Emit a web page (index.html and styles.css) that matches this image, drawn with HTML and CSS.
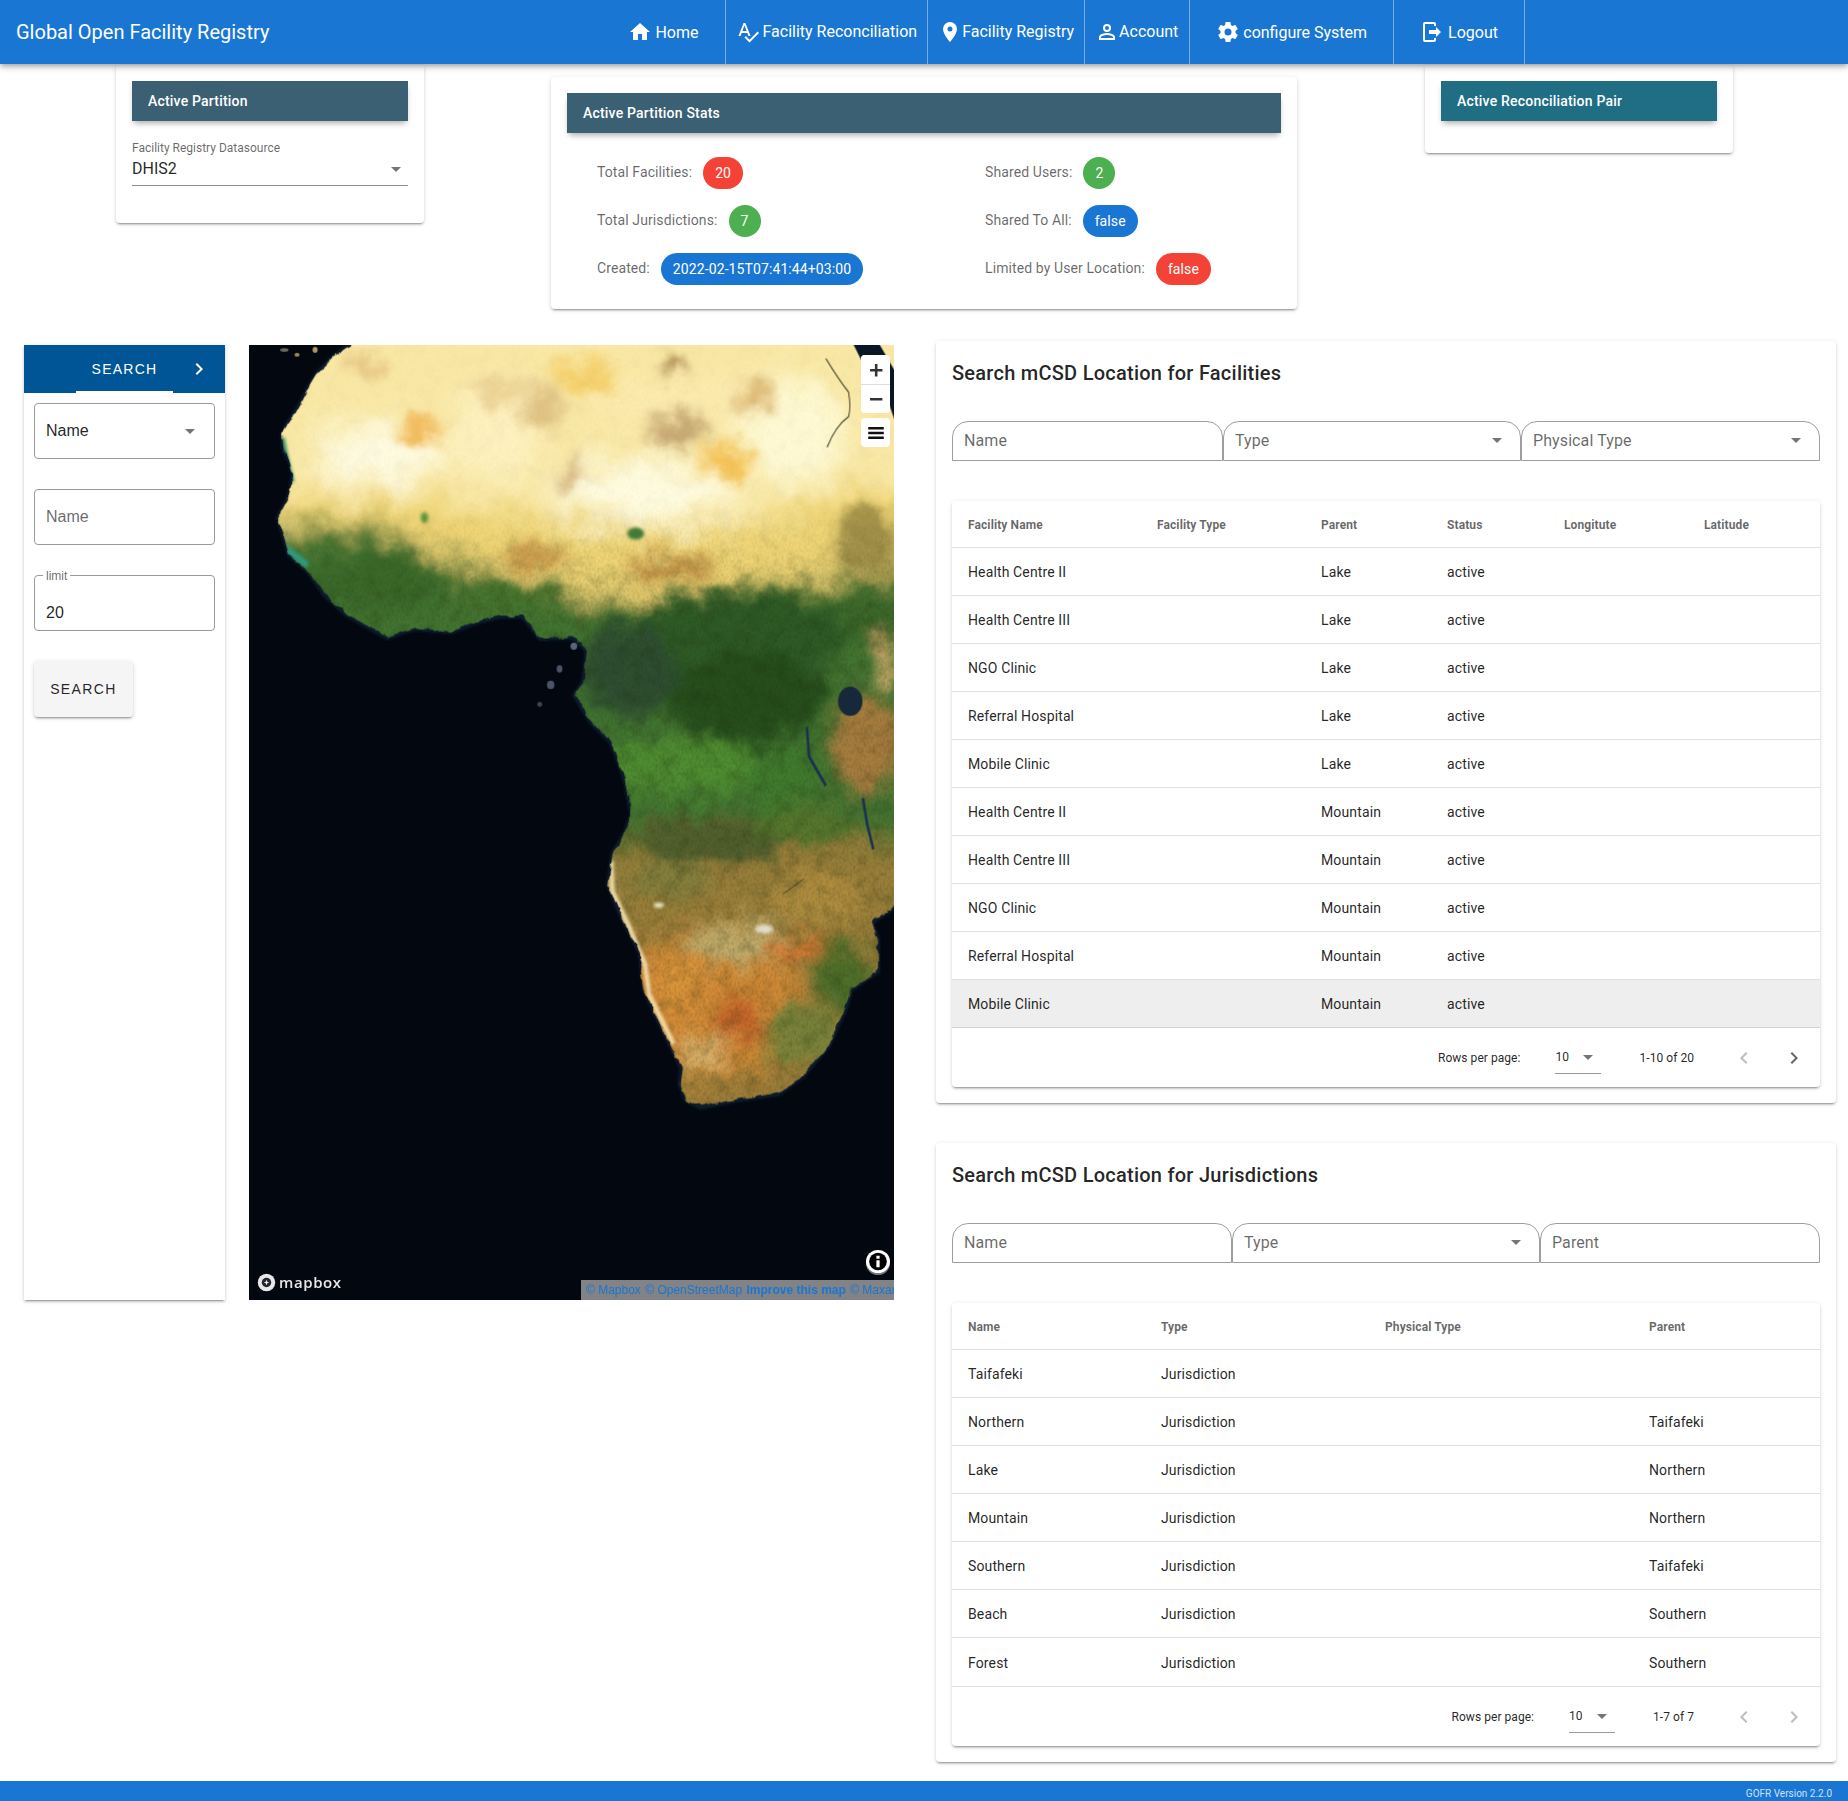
FILE: index.html
```html
<!DOCTYPE html>
<html lang="en">
<head>
  <meta charset="UTF-8" />
  <title>Global Open Facility Registry</title>
  <link rel="stylesheet" href="styles.css">
</head>
<body>

  <svg class="icon-defs" aria-hidden="true">
    <symbol id="i-home" viewBox="0 0 24 24"><path d="M10,20V14H14V20H19V12H22L12,3L2,12H5V20H10Z"/></symbol>
    <symbol id="i-check" viewBox="0 0 24 24"><path d="M21.59,11.59L13.5,19.68L9.83,16L8.42,17.41L13.5,22.5L23,13M6.43,11L8.5,5.5L10.57,11M12.45,16H14.54L9.43,3H7.57L2.46,16H4.55L5.67,13H11.31L12.45,16Z"/></symbol>
    <symbol id="i-marker" viewBox="0 0 24 24"><path d="M12,11.5A2.5,2.5 0 0,1 9.5,9A2.5,2.5 0 0,1 12,6.5A2.5,2.5 0 0,1 14.5,9A2.5,2.5 0 0,1 12,11.5M12,2A7,7 0 0,0 5,9C5,14.25 12,22 12,22C12,22 19,14.25 19,9A7,7 0 0,0 12,2Z"/></symbol>
    <symbol id="i-account" viewBox="0 0 24 24"><path d="M12,4A4,4 0 0,1 16,8A4,4 0 0,1 12,12A4,4 0 0,1 8,8A4,4 0 0,1 12,4M12,6A2,2 0 0,0 10,8A2,2 0 0,0 12,10A2,2 0 0,0 14,8A2,2 0 0,0 12,6M12,13C14.67,13 20,14.33 20,17V20H4V17C4,14.33 9.33,13 12,13M12,14.9C9.03,14.9 5.9,16.36 5.9,17V18.1H18.1V17C18.1,16.36 14.97,14.9 12,14.9Z"/></symbol>
    <symbol id="i-cog" viewBox="0 0 24 24"><path d="M12,15.5A3.5,3.5 0 0,1 8.5,12A3.5,3.5 0 0,1 12,8.5A3.5,3.5 0 0,1 15.5,12A3.5,3.5 0 0,1 12,15.5M19.43,12.97C19.47,12.65 19.5,12.33 19.5,12C19.5,11.67 19.47,11.34 19.43,11L21.54,9.37C21.73,9.22 21.78,8.95 21.66,8.73L19.66,5.27C19.54,5.05 19.27,4.96 19.05,5.05L16.56,6.05C16.04,5.66 15.5,5.32 14.87,5.07L14.5,2.42C14.46,2.18 14.25,2 14,2H10C9.75,2 9.54,2.18 9.5,2.42L9.13,5.07C8.5,5.32 7.96,5.66 7.44,6.05L4.95,5.05C4.73,4.96 4.46,5.05 4.34,5.27L2.34,8.73C2.21,8.95 2.27,9.22 2.46,9.37L4.57,11C4.53,11.34 4.5,11.67 4.5,12C4.5,12.33 4.53,12.65 4.57,12.97L2.46,14.63C2.27,14.78 2.21,15.05 2.34,15.27L4.34,18.73C4.46,18.95 4.73,19.03 4.95,18.95L7.44,17.94C7.96,18.34 8.5,18.68 9.13,18.93L9.5,21.58C9.54,21.82 9.75,22 10,22H14C14.25,22 14.46,21.82 14.5,21.58L14.87,18.93C15.5,18.67 16.04,18.34 16.56,17.94L19.05,18.95C19.27,19.03 19.54,18.95 19.66,18.73L21.66,15.27C21.78,15.05 21.73,14.78 21.54,14.63L19.43,12.97Z"/></symbol>
    <symbol id="i-logout" viewBox="0 0 24 24"><path d="M16,17V14H9V10H16V7L21,12L16,17M14,2A2,2 0 0,1 16,4V6H14V4H5V20H14V18H16V20A2,2 0 0,1 14,22H5A2,2 0 0,1 3,20V4A2,2 0 0,1 5,2H14Z"/></symbol>
    <symbol id="i-right" viewBox="0 0 24 24"><path d="M8.59,16.58L13.17,12L8.59,7.41L10,6L16,12L10,18L8.59,16.58Z"/></symbol>
    <symbol id="i-left" viewBox="0 0 24 24"><path d="M15.41,16.58L10.83,12L15.41,7.41L14,6L8,12L14,18L15.41,16.58Z"/></symbol>
    <symbol id="i-drop" viewBox="0 0 24 24"><path d="M7,10L12,15L17,10H7Z"/></symbol>
  </svg>

  <header class="app-bar">
    <div class="app-title">Global Open Facility Registry</div>
    <nav class="app-nav">
      <a class="nav-btn nav-wide"><svg class="nav-icon"><use href="#i-home"/></svg>Home</a>
      <a class="nav-btn nav-tight"><svg class="nav-icon nav-icon-gap"><use href="#i-check"/></svg>Facility Reconciliation</a>
      <a class="nav-btn nav-tight"><svg class="nav-icon"><use href="#i-marker"/></svg>Facility Registry</a>
      <a class="nav-btn nav-tight nav-account"><svg class="nav-icon"><use href="#i-account"/></svg>Account</a>
      <a class="nav-btn nav-wide"><svg class="nav-icon"><use href="#i-cog"/></svg>configure System</a>
      <a class="nav-btn nav-wide"><svg class="nav-icon"><use href="#i-logout"/></svg>Logout</a>
    </nav>
  </header>

  <section class="top-row">
    <div class="card side-card partition-card">
      <div class="card-head">Active Partition</div>
      <div class="source-select">
        <label>Facility Registry Datasource</label>
        <div class="source-value">DHIS2<svg class="drop"><use href="#i-drop"/></svg></div>
      </div>
    </div>

    <div class="card stats-card">
      <div class="card-head">Active Partition Stats</div>
      <div class="stats-grid">
        <div class="stat"><span>Total Facilities:</span><b class="chip chip-red">20</b></div>
        <div class="stat"><span>Shared Users:</span><b class="chip chip-green">2</b></div>
        <div class="stat"><span>Total Jurisdictions:</span><b class="chip chip-green">7</b></div>
        <div class="stat"><span>Shared To All:</span><b class="chip chip-blue">false</b></div>
        <div class="stat"><span>Created:</span><b class="chip chip-blue">2022-02-15T07:41:44+03:00</b></div>
        <div class="stat"><span>Limited by User Location:</span><b class="chip chip-red">false</b></div>
      </div>
    </div>

    <div class="card side-card pair-card">
      <div class="card-head card-head-teal">Active Reconciliation Pair</div>
    </div>
  </section>

  <main class="main-row">
    <div class="map-col">
      <aside class="search-panel">
        <div class="tab-bar">
          <span class="tab-label">SEARCH</span>
          <svg class="tab-arrow"><use href="#i-right"/></svg>
        </div>
        <div class="search-form">
          <div class="outlined outlined-select">Name<svg class="drop"><use href="#i-drop"/></svg></div>
          <div class="outlined outlined-hint">Name</div>
          <div class="outlined outlined-value"><span class="float-label">limit</span>20</div>
          <button class="search-btn">SEARCH</button>
        </div>
      </aside>

      <div class="map">
        <svg class="map-art" viewBox="21 8 1533 1560" preserveAspectRatio="none">
          <defs>
            <path id="land" d="M262 -40 L262 8 L225 26 L205 40 L180 58 L165 75 L148 98 L128 122 L112 138 L100 155 L104 180 L118 198 L126 220 L120 242 L115 258 L90 290 L104 322 L116 350 L160 376 L200 415 L250 446 L300 466 L350 485 L385 476 L420 470 L500 476 L560 460 L620 450 L670 450 L690 466 L712 486 L790 485 L824 505 L820 535 L815 560 L795 580 L830 620 L880 655 L900 690 L915 720 L930 775 L915 805 L885 840 L875 890 L905 940 L950 1000 L960 1060 L1000 1120 L1050 1190 L1045 1215 L1060 1240 L1095 1252 L1180 1240 L1280 1230 L1340 1200 L1400 1150 L1440 1090 L1452 1060 L1516 1030 L1516 980 L1500 950 L1610 900 L1610 -40 Z"/>
            <filter id="coast" x="-5%" y="-5%" width="110%" height="110%" color-interpolation-filters="sRGB">
              <feTurbulence type="fractalNoise" baseFrequency="0.035 0.05" numOctaves="4" seed="11"/>
              <feDisplacementMap in="SourceGraphic" scale="12" xChannelSelector="R" yChannelSelector="G"/>
              <feGaussianBlur stdDeviation="1.500 1"/>
            </filter>
            <mask id="land-mask" maskUnits="userSpaceOnUse" x="-40" y="-40" width="1700" height="1700">
              <use href="#land" fill="#fff" filter="url(#coast)"/>
            </mask>
            <filter id="wide" x="-20%" y="-20%" width="140%" height="140%"><feGaussianBlur stdDeviation="34 22"/></filter>
            <filter id="soft" x="-20%" y="-20%" width="140%" height="140%"><feGaussianBlur stdDeviation="18 12"/></filter>
            <filter id="fine" x="-20%" y="-20%" width="140%" height="140%"><feGaussianBlur stdDeviation="4 3"/></filter>
            <filter id="organic" x="0" y="0" width="100%" height="100%" color-interpolation-filters="sRGB">
              <feTurbulence type="fractalNoise" baseFrequency="0.014 0.02" numOctaves="5" seed="5"/>
              <feDisplacementMap in="SourceGraphic" scale="60" xChannelSelector="R" yChannelSelector="G"/>
            </filter>
            <filter id="grain" x="0" y="0" width="100%" height="100%" color-interpolation-filters="sRGB">
              <feTurbulence type="fractalNoise" baseFrequency="0.24 0.17" numOctaves="2" seed="9"/>
              <feColorMatrix values="0 0 0 0 0.16  0 0 0 0 0.13  0 0 0 0 0.04  1.800 0 0 0 -0.750"/>
            </filter>
            <filter id="mottle" x="0" y="0" width="100%" height="100%" color-interpolation-filters="sRGB">
              <feTurbulence type="fractalNoise" baseFrequency="0.03 0.04" numOctaves="3" seed="21"/>
              <feColorMatrix values="0 0 0 0 0.10  0 0 0 0 0.16  0 0 0 0 0.04  2 0 0 0 -0.900"/>
            </filter>
            <linearGradient id="grain-ramp" x1="0" y1="0" x2="0" y2="1">
              <stop offset="0" stop-color="#141414"/>
              <stop offset="0.17" stop-color="#1c1c1c"/>
              <stop offset="0.28" stop-color="#ddd"/>
              <stop offset="1" stop-color="#ddd"/>
            </linearGradient>
            <mask id="grain-fade" maskUnits="userSpaceOnUse" x="21" y="8" width="1533" height="1560">
              <rect x="21" y="8" width="1533" height="1560" fill="url(#grain-ramp)"/>
            </mask>
          </defs>

          <rect x="21" y="8" width="1533" height="1560" fill="#03070f"/>
          <g filter="url(#fine)"><use href="#land" fill="none" stroke="#0e1b2e" stroke-width="10"/></g>

          <g mask="url(#land-mask)">
            <g filter="url(#organic)">
              <rect x="-40" y="-40" width="1700" height="1700" fill="#fae9a6"/>
              <g filter="url(#wide)">
                <ellipse cx="330" cy="185" rx="150" ry="50" fill="#fffce2"/>
                <ellipse cx="960" cy="245" rx="220" ry="50" fill="#fffce0"/>
                <ellipse cx="610" cy="150" rx="110" ry="80" fill="#fff2c0"/>
                <ellipse cx="1310" cy="150" rx="130" ry="90" fill="#fffad4"/>
                <ellipse cx="1000" cy="100" rx="200" ry="40" fill="#fcebae"/>
                <path d="M70 262 L330 262 L540 270 L780 300 L1000 325 L1200 310 L1430 250 L1620 240 L1620 430 L70 430 Z" fill="#f0d576"/>
                <path d="M60 310 L300 300 L480 362 L650 385 L820 420 L1000 430 L1200 400 L1400 400 L1620 350 L1620 880 L860 880 L60 560 Z" fill="#437430"/>
                <path d="M860 830 L1120 800 L1620 820 L1620 1320 L860 1320 Z" fill="#9a803a"/>
                <ellipse cx="1120" cy="1085" rx="220" ry="120" fill="#d48c38"/>
              </g>
              <g filter="url(#soft)">
                <ellipse cx="1040" cy="150" rx="70" ry="30" fill="#c9ab74"/>
                <ellipse cx="1030" cy="38" rx="30" ry="18" fill="#a98650"/>
                <ellipse cx="785" cy="220" rx="34" ry="22" fill="#d8b984"/>
                <ellipse cx="720" cy="110" rx="56" ry="28" fill="#e0c384"/>
                <ellipse cx="300" cy="42" rx="56" ry="16" fill="#e8c684"/>
                <ellipse cx="430" cy="145" rx="52" ry="14" fill="#f2ac3e"/>
                <ellipse cx="1160" cy="195" rx="60" ry="26" fill="#f5c254"/>
                <ellipse cx="820" cy="60" rx="85" ry="22" fill="#f6d06a"/>
                <ellipse cx="1225" cy="95" rx="40" ry="26" fill="#e0bc78"/>
                <ellipse cx="610" cy="80" rx="70" ry="18" fill="#ebd092"/>
                <ellipse cx="700" cy="352" rx="80" ry="18" fill="#c8984a"/>
                <ellipse cx="1020" cy="372" rx="110" ry="20" fill="#c09245"/>
                <ellipse cx="1490" cy="330" rx="85" ry="56" fill="#a3924a"/>
                <ellipse cx="1510" cy="460" rx="70" ry="50" fill="#3b682c"/>
                <ellipse cx="1535" cy="520" rx="26" ry="45" fill="#d0ae6c"/>
                <ellipse cx="1490" cy="660" rx="85" ry="85" fill="#a87e40"/>
                <ellipse cx="1180" cy="490" rx="260" ry="80" fill="#2f5c28"/>
                <ellipse cx="1200" cy="585" rx="190" ry="75" fill="#27501f"/>
                <ellipse cx="920" cy="540" rx="115" ry="75" fill="#2f5030"/>
                <ellipse cx="1050" cy="700" rx="240" ry="44" fill="#4f8f33"/>
                <ellipse cx="1290" cy="715" rx="80" ry="55" fill="#3f7c2d"/>
                <ellipse cx="300" cy="395" rx="180" ry="44" fill="#3b6a2b"/>
                <ellipse cx="620" cy="425" rx="140" ry="24" fill="#47762e"/>
                <ellipse cx="1120" cy="815" rx="190" ry="38" fill="#51602d"/>
                <ellipse cx="1340" cy="790" rx="120" ry="34" fill="#55782f"/>
                <ellipse cx="1370" cy="915" rx="100" ry="42" fill="#b08e40"/>
                <ellipse cx="1020" cy="880" rx="100" ry="34" fill="#86803e"/>
                <ellipse cx="1190" cy="985" rx="130" ry="38" fill="#c2ac6a"/>
                <ellipse cx="1340" cy="995" rx="90" ry="22" fill="#d87e34"/>
                <ellipse cx="1430" cy="1040" rx="70" ry="60" fill="#50702c"/>
                <ellipse cx="1330" cy="1130" rx="85" ry="46" fill="#7a843a"/>
                <ellipse cx="1185" cy="1115" rx="60" ry="36" fill="#c8682a"/>
                <ellipse cx="1040" cy="1050" rx="50" ry="45" fill="#dc963a"/>
                <ellipse cx="1100" cy="1165" rx="60" ry="30" fill="#dab26a"/>
                <ellipse cx="1200" cy="1225" rx="100" ry="14" fill="#a07e38"/>
              </g>
            </g>
            <rect x="21" y="8" width="1533" height="1560" filter="url(#mottle)" mask="url(#grain-fade)" opacity="0.3"/>
            <rect x="21" y="8" width="1533" height="1560" filter="url(#grain)" mask="url(#grain-fade)" opacity="0.35"/>
            <g filter="url(#fine)">
              <path d="M882 850 L884 900 L925 960 L962 1020 L972 1070 L1030 1150" fill="none" stroke="#f4e0b0" stroke-width="10"/>
              <path d="M100 160 L112 200 L124 232" fill="none" stroke="#1e8a5a" stroke-width="10"/>
              <path d="M110 340 L160 368" fill="none" stroke="#2f9a80" stroke-width="12"/>
              <ellipse cx="940" cy="316" rx="20" ry="10" fill="#3f7a35"/>
              <ellipse cx="438" cy="290" rx="9" ry="9" fill="#5d9440"/>
              <ellipse cx="995" cy="923" rx="12" ry="4" fill="#e6efd0"/>
              <ellipse cx="1245" cy="962" rx="22" ry="7" fill="#e8e8dc" opacity="0.85"/>
            </g>
            <path d="M1392 30 Q1420 62 1446 85 Q1452 110 1446 125 Q1415 140 1395 175" fill="none" stroke="#1e2012" stroke-width="2"/>
            <path d="M1445 -10 L1505 -10 L1560 55 L1560 140 L1530 80 L1480 38 Z" fill="#0a1626"/>
            <ellipse cx="1450" cy="590" rx="29" ry="24" fill="#17283a"/>
            <path d="M1347 632 L1352 680 L1392 728" fill="none" stroke="#1a3052" stroke-width="6"/>
            <path d="M1480 748 L1490 790 L1505 832" fill="none" stroke="#1a3052" stroke-width="6"/>
            <path d="M1290 905 L1340 880" fill="none" stroke="#2a2f20" stroke-width="1.500"/>
          </g>

          <g fill="#6b6a5a">
            <ellipse cx="105" cy="16" rx="10" ry="3"/>
            <ellipse cx="135" cy="24" rx="6" ry="3" fill="#a08a5a"/>
            <ellipse cx="178" cy="16" rx="6" ry="5" fill="#b0986a"/>
            <ellipse cx="793" cy="500" rx="8" ry="6" fill="#5a6478"/>
            <ellipse cx="759" cy="537" rx="7" ry="6" fill="#4a5468"/>
            <ellipse cx="738" cy="563" rx="9" ry="7" fill="#4a5468"/>
            <ellipse cx="712" cy="595" rx="6" ry="4" fill="#3a4458"/>
          </g>
        </svg>

        <div class="map-controls">
          <div class="ctrl-group">
            <button class="ctrl-btn"><svg viewBox="0 0 24 24"><path d="M10.800 5.500h2.800v5.300H19v2.800H13.600V19H10.800V13.600H5.500V10.800H10.800Z"/></svg></button>
            <button class="ctrl-btn"><svg viewBox="0 0 24 24"><path d="M5.500 10.800H19V13.600H5.500Z"/></svg></button>
          </div>
          <div class="ctrl-group">
            <button class="ctrl-btn"><svg viewBox="0 0 24 24"><path d="M3.500 5.500H20.500V8.300H3.500ZM3.500 10.600H20.500V13.400H3.500ZM3.500 15.700H20.500V18.500H3.500Z"/></svg></button>
          </div>
        </div>

        <div class="map-info"><svg viewBox="0 0 24 24"><circle cx="12" cy="12" r="9.200" fill="#000"/><path d="M10.300 6h3.400v3.200h-3.400ZM10.300 10.600h3.400V18h-3.400Z" fill="#fff"/></svg></div>

        <div class="map-logo">
          <svg viewBox="0 0 24 24"><circle cx="12" cy="12" r="11" fill="#e8e8e8"/><circle cx="12" cy="12" r="6" fill="#22262c"/><path d="M12 8.500L13 11L15.500 12L13 13L12 15.500L11 13L8.500 12L11 11Z" fill="#e8e8e8"/></svg>
          <span>mapbox</span>
        </div>

        <div class="map-attrib"><a>© Mapbox</a> <a>© OpenStreetMap</a> <a class="improve">Improve this map</a> <a>© Maxar</a></div>
      </div>
    </div>

    <div class="right-col">
      <section class="card table-card">
        <h2>Search mCSD Location for Facilities</h2>
        <div class="seg-row seg-fac">
          <div class="seg-field">Name</div>
          <div class="seg-field">Type<svg class="drop"><use href="#i-drop"/></svg></div>
          <div class="seg-field">Physical Type<svg class="drop"><use href="#i-drop"/></svg></div>
        </div>
        <div class="table-wrap">
          <table class="data-table fac-table">
            <colgroup><col class="c1"><col class="c2"><col class="c3"><col class="c4"><col class="c5"><col class="c6"></colgroup>
            <thead><tr><th>Facility Name</th><th>Facility Type</th><th>Parent</th><th>Status</th><th>Longitute</th><th>Latitude</th></tr></thead>
            <tbody>
              <tr><td>Health Centre II</td><td></td><td>Lake</td><td>active</td><td></td><td></td></tr>
              <tr><td>Health Centre III</td><td></td><td>Lake</td><td>active</td><td></td><td></td></tr>
              <tr><td>NGO Clinic</td><td></td><td>Lake</td><td>active</td><td></td><td></td></tr>
              <tr><td>Referral Hospital</td><td></td><td>Lake</td><td>active</td><td></td><td></td></tr>
              <tr><td>Mobile Clinic</td><td></td><td>Lake</td><td>active</td><td></td><td></td></tr>
              <tr><td>Health Centre II</td><td></td><td>Mountain</td><td>active</td><td></td><td></td></tr>
              <tr><td>Health Centre III</td><td></td><td>Mountain</td><td>active</td><td></td><td></td></tr>
              <tr><td>NGO Clinic</td><td></td><td>Mountain</td><td>active</td><td></td><td></td></tr>
              <tr><td>Referral Hospital</td><td></td><td>Mountain</td><td>active</td><td></td><td></td></tr>
              <tr class="row-hover"><td>Mobile Clinic</td><td></td><td>Mountain</td><td>active</td><td></td><td></td></tr>
            </tbody>
          </table>
          <div class="pager">
            <span>Rows per page:</span>
            <div class="pager-select">10<svg class="drop"><use href="#i-drop"/></svg></div>
            <span>1-10 of 20</span>
            <div class="pager-nav">
              <svg class="off"><use href="#i-left"/></svg>
              <svg><use href="#i-right"/></svg>
            </div>
          </div>
        </div>
      </section>

      <section class="card table-card">
        <h2>Search mCSD Location for Jurisdictions</h2>
        <div class="seg-row seg-jur">
          <div class="seg-field">Name</div>
          <div class="seg-field">Type<svg class="drop"><use href="#i-drop"/></svg></div>
          <div class="seg-field">Parent</div>
        </div>
        <div class="table-wrap">
          <table class="data-table jur-table">
            <colgroup><col class="c1"><col class="c2"><col class="c3"><col class="c4"></colgroup>
            <thead><tr><th>Name</th><th>Type</th><th>Physical Type</th><th>Parent</th></tr></thead>
            <tbody>
              <tr><td>Taifafeki</td><td>Jurisdiction</td><td></td><td></td></tr>
              <tr><td>Northern</td><td>Jurisdiction</td><td></td><td>Taifafeki</td></tr>
              <tr><td>Lake</td><td>Jurisdiction</td><td></td><td>Northern</td></tr>
              <tr><td>Mountain</td><td>Jurisdiction</td><td></td><td>Northern</td></tr>
              <tr><td>Southern</td><td>Jurisdiction</td><td></td><td>Taifafeki</td></tr>
              <tr><td>Beach</td><td>Jurisdiction</td><td></td><td>Southern</td></tr>
              <tr class="row-last"><td>Forest</td><td>Jurisdiction</td><td></td><td>Southern</td></tr>
            </tbody>
          </table>
          <div class="pager">
            <span>Rows per page:</span>
            <div class="pager-select">10<svg class="drop"><use href="#i-drop"/></svg></div>
            <span>1-7 of 7</span>
            <div class="pager-nav">
              <svg class="off"><use href="#i-left"/></svg>
              <svg class="off"><use href="#i-right"/></svg>
            </div>
          </div>
        </div>
      </section>
    </div>
  </main>

  <footer class="app-footer">GOFR Version 2.2.0</footer>

</body>
</html>
```

FILE: styles.css
```css
* { box-sizing: border-box; margin: 0; padding: 0; }
html, body { height: 1801px; }
body {
  position: relative;
  font-family: Roboto, sans-serif;
  font-size: 14px;
  color: rgba(0,0,0,.87);
  background: #fff;
  overflow: hidden;
}
.icon-defs { position: absolute; width: 0; height: 0; }

/* app bar */
.app-bar {
  position: relative;
  z-index: 5;
  display: flex;
  align-items: center;
  height: 64px;
  padding: 0 323px 0 16px;
  background: #1976d2;
  color: #fff;
  box-shadow: 0 2px 4px -1px rgba(0,0,0,.2), 0 4px 5px rgba(0,0,0,.14), 0 1px 10px rgba(0,0,0,.12);
}
.app-title { font-size: 20px; }
.app-nav { display: flex; height: 64px; margin-left: auto; }
.nav-btn {
  display: flex;
  align-items: center;
  height: 64px;
  font-size: 16px;
  border-right: 1px solid rgba(255,255,255,.4);
  white-space: nowrap;
}
.nav-wide { padding: 0 26px; }
.nav-wide .nav-icon { margin-right: 3px; }
.nav-wide:last-child .nav-icon { margin-right: 4px; }
.nav-tight { justify-content: space-between; padding: 0 10px 2px 10px; }
.nav-account { padding-right: 11px; }
.nav-icon { width: 24px; height: 24px; fill: #fff; flex: none; }
.nav-tight .nav-icon { position: relative; top: 1px; }
.nav-icon-gap { margin-right: 3px; }

/* cards */
.card {
  background: #fff;
  border-radius: 4px;
  box-shadow: 0 3px 1px -2px rgba(0,0,0,.2), 0 2px 2px rgba(0,0,0,.14), 0 1px 5px rgba(0,0,0,.12);
}
.card-head {
  height: 40px;
  line-height: 40px;
  padding: 0 16px;
  background: #3b5f73;
  color: #fff;
  font-weight: 500;
  letter-spacing: .2px;
  box-shadow: 0 4px 6px -2px rgba(0,0,0,.35);
}
.card-head-teal { background: #206e84; }

.top-row {
  display: flex;
  align-items: flex-start;
  height: 245px;
  padding-left: 116px;
  margin-top: 1px;
}
.side-card { width: 308px; padding: 16px; }
.partition-card { height: 158px; }
.pair-card { height: 88px; margin-left: 128px; }
.stats-card { width: 746px; height: 232px; margin: 12px 0 0 127px; padding: 16px; }

.source-select { margin-top: 19px; }
.source-select label { display: block; font-size: 12px; line-height: 16px; color: rgba(0,0,0,.6); }
.source-value {
  display: flex;
  justify-content: space-between;
  align-items: center;
  height: 30px;
  font-size: 16px;
  border-bottom: 1px solid #8c8c8c;
  padding-bottom: 4px;
}
.drop { width: 24px; height: 24px; fill: #757575; flex: none; }

.stats-grid {
  display: grid;
  grid-template-columns: 388px 1fr;
  grid-auto-rows: 48px;
  padding: 16px 0 0 30px;
}
.stat { display: flex; align-items: center; color: rgba(0,0,0,.6); }
.stat span { position: relative; top: -1px; margin-right: 11px; letter-spacing: .1px; }
.chip {
  display: inline-block;
  min-width: 32px;
  height: 32px;
  line-height: 32px;
  padding: 0 12px;
  border-radius: 16px;
  color: #fff;
  font-weight: 400;
  letter-spacing: .1px;
  text-align: center;
}
.chip-red { background: #f44336; }
.chip-green { background: #4caf50; }
.chip-blue { background: #1976d2; }

/* main row */
.main-row { display: flex; align-items: flex-start; padding-left: 24px; }
.map-col { display: flex; gap: 24px; margin-top: 35px; }

.search-panel {
  width: 201px;
  height: 955px;
  font-family: "Liberation Sans", Arial, sans-serif;
  background: #fff;
  box-shadow: 0 3px 1px -2px rgba(0,0,0,.2), 0 2px 2px rgba(0,0,0,.14), 0 1px 5px rgba(0,0,0,.12);
}
.tab-bar {
  position: relative;
  display: flex;
  justify-content: center;
  align-items: center;
  height: 48px;
  background: #005596;
  color: #fff;
}
.tab-label {
  align-self: stretch;
  width: 97px;
  line-height: 48px;
  text-align: center;
  font-size: 14px;
  letter-spacing: 1.25px;
  border-bottom: 2px solid #fff;
}
.tab-arrow { position: absolute; right: 14px; top: 12px; width: 24px; height: 24px; fill: #fff; }
.search-form { display: flex; flex-direction: column; gap: 30px; padding: 10px 10px 0; }
.outlined {
  position: relative;
  display: flex;
  align-items: center;
  justify-content: space-between;
  height: 56px;
  padding: 0 11px;
  font-size: 16px;
  border: 1px solid #9a9a9a;
  border-radius: 4px;
  color: rgba(0,0,0,.87);
}
.outlined-select { padding-right: 12px; }
.outlined-hint { color: rgba(0,0,0,.6); }
.outlined-value { align-items: flex-end; padding-bottom: 8px; }
.float-label {
  position: absolute;
  left: 8px;
  top: -6px;
  padding: 0 3px;
  background: #fff;
  font-size: 12px;
  line-height: 12px;
  color: rgba(0,0,0,.6);
}
.search-btn {
  width: 99px;
  height: 56px;
  border: 0;
  border-radius: 4px;
  background: #f5f5f5;
  font-family: inherit;
  font-size: 14px;
  letter-spacing: 1.4px;
  color: rgba(0,0,0,.87);
  box-shadow: 0 3px 1px -2px rgba(0,0,0,.2), 0 2px 2px rgba(0,0,0,.14), 0 1px 5px rgba(0,0,0,.12);
}

/* map */
.map { position: relative; width: 645px; height: 955px; overflow: hidden; background: #03070f; }
.map-art { display: block; width: 100%; height: 100%; }
.map-controls { position: absolute; top: 10px; right: 4px; display: flex; flex-direction: column; gap: 5px; }
.ctrl-group { width: 29px; background: #fff; border-radius: 4px; overflow: hidden; }
.ctrl-btn { display: flex; justify-content: center; align-items: center; width: 29px; height: 29px; border: 0; background: #fff; }
.ctrl-btn + .ctrl-btn { border-top: 1px solid #ddd; }
.ctrl-btn svg { width: 22px; height: 22px; fill: #333; }
.ctrl-group:last-child .ctrl-btn svg { fill: #111; }
.map-info {
  position: absolute;
  right: 4px;
  bottom: 27px;
  width: 24px;
  height: 23px;
  background: #fff;
  border-radius: 50%;
  box-shadow: 0 2px 0 #777;
}
.map-info svg { display: block; width: 24px; height: 23px; }
.map-logo { position: absolute; left: 8px; bottom: 8px; display: flex; align-items: center; gap: 3px; color: #e8e8e8; font-family: "Open Sans", sans-serif; font-size: 15px; font-weight: 600; letter-spacing: .6px; line-height: 20px; }
.map-logo svg { width: 19px; height: 19px; }
.map-attrib {
  position: absolute;
  right: 0;
  bottom: 0;
  width: 313px;
  height: 20px;
  padding: 0 0 0 5px;
  overflow: hidden;
  white-space: nowrap;
  background: rgba(255,255,255,.5);
  font-family: "Liberation Sans", Arial, sans-serif;
  font-size: 12px;
  line-height: 20px;
  color: #1976d2;
}
.map-attrib a { margin-right: 1px; }
.improve { font-weight: 700; }

/* right column */
.right-col { display: flex; flex-direction: column; gap: 40px; width: 900px; margin-left: 42px; margin-top: 31px; }
.table-card { padding: 16px; }
.table-card h2 { font-size: 20px; font-weight: 500; line-height: 32px; letter-spacing: .25px; }
.seg-row { display: grid; height: 40px; margin-top: 32px; }
.seg-fac { grid-template-columns: 271px 298px 1fr; }
.seg-jur { grid-template-columns: 280px 308px 1fr; }
.seg-field {
  display: flex;
  justify-content: space-between;
  align-items: center;
  padding: 0 11px 2px;
  font-size: 16px;
  letter-spacing: .1px;
  color: rgba(0,0,0,.6);
  border: 1px solid #9e9e9e;
  border-radius: 16px 16px 0 0;
}
.table-wrap {
  margin-top: 40px;
  border-radius: 4px;
  box-shadow: 0 3px 1px -2px rgba(0,0,0,.2), 0 2px 2px rgba(0,0,0,.14), 0 1px 5px rgba(0,0,0,.12);
}
.data-table { width: 100%; table-layout: fixed; border-collapse: separate; border-spacing: 0; }
.data-table th, .data-table td { height: 48px; padding: 0 16px; text-align: left; border-bottom: 1px solid rgba(0,0,0,.12); }
.data-table td { letter-spacing: .13px; }
.data-table th { height: 47px; padding-top: 2px; font-size: 12px; font-weight: 700; letter-spacing: .1px; color: rgba(0,0,0,.6); }
.data-table .row-last td { height: 49px; padding-top: 2px; }
.row-hover td { background: #eee; }
.fac-table .c1 { width: 189px; }
.fac-table .c2 { width: 164px; }
.fac-table .c3 { width: 126px; }
.fac-table .c4 { width: 117px; }
.fac-table .c5 { width: 140px; }
.jur-table .c1 { width: 193px; }
.jur-table .c2 { width: 224px; }
.jur-table .c3 { width: 264px; }

.pager {
  display: flex;
  justify-content: flex-end;
  align-items: center;
  height: 59px;
  padding: 0 14px 0 0;
  font-size: 12px;
  letter-spacing: .05px;
  color: rgba(0,0,0,.87);
}
.pager-select {
  position: relative;
  display: flex;
  align-items: center;
  justify-content: space-between;
  width: 46px;
  height: 32px;
  margin: 0 38px 0 35px;
  border-bottom: 1px solid #9a9a9a;
  padding-right: 1px;
}
.pager-nav { display: flex; gap: 26px; margin-left: 38px; }
.pager-nav svg { width: 24px; height: 24px; fill: #666; }
.pager-nav svg.off { fill: #bdbdbd; }

/* footer */
.app-footer {
  position: absolute;
  left: 0;
  right: 0;
  bottom: 0;
  height: 20px;
  padding-right: 16px;
  background: #1976d2;
  color: rgba(255,255,255,.8);
  font-size: 10px;
  line-height: 26px;
  text-align: right;
}
```
